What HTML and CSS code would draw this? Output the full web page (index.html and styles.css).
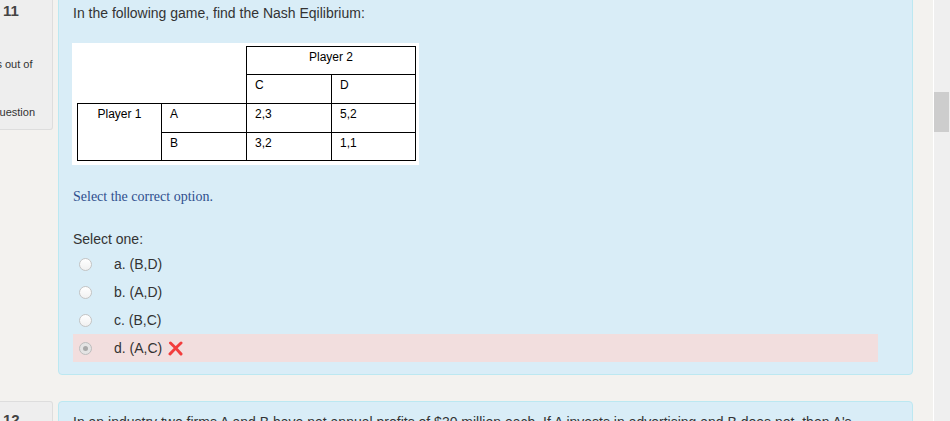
FILE: index.html
```html
<!DOCTYPE html>
<html>
<head>
<meta charset="utf-8">
<link rel="stylesheet" href="styles.css">
</head>
<body>
<div class="page">
  <div class="main">
    <div class="que">
      <div class="info">
        <h3 class="qno">11</h3>
        <div class="info-line first">Marks out of<br>1.00</div>
        <div class="info-line second">Flag question</div>
      </div>
      <div class="content">
        <p class="qtext">In the following game, find the Nash Eqilibrium:</p>
        <div class="figure">
          <table class="game">
            <colgroup>
              <col class="c84">
              <col class="c85">
              <col class="c85">
              <col class="c84">
            </colgroup>
            <tr class="r1">
              <td class="blank" colspan="2" rowspan="2"></td>
              <td class="center" colspan="2">Player 2</td>
            </tr>
            <tr class="r2">
              <td>C</td>
              <td>D</td>
            </tr>
            <tr class="r3">
              <td class="center" rowspan="2">Player 1</td>
              <td>A</td>
              <td>2,3</td>
              <td>5,2</td>
            </tr>
            <tr class="r4">
              <td>B</td>
              <td>3,2</td>
              <td>1,1</td>
            </tr>
          </table>
        </div>
        <p class="prompt-serif">Select the correct option.</p>
        <p class="prompt">Select one:</p>
        <div class="answers">
          <div class="opt"><span class="radio"></span><span class="label">a. (B,D)</span></div>
          <div class="opt"><span class="radio"></span><span class="label">b. (A,D)</span></div>
          <div class="opt"><span class="radio"></span><span class="label">c. (B,C)</span></div>
          <div class="opt incorrect"><span class="radio checked"></span><span class="label">d. (A,C)</span>
            <svg class="xmark" width="15" height="15" viewBox="0 0 15 15"><path d="M2.5 2 Q7.5 6.5 13 13 M13 2 Q7.5 7 2 13" stroke="#f23d3d" stroke-width="3" fill="none" stroke-linecap="round"/></svg>
          </div>
        </div>
      </div>
    </div>
    <div class="que">
      <div class="info">
        <h3 class="qno">12</h3>
      </div>
      <div class="content">
        <p class="qtext">In an industry two firms A and B have net annual profits of $30 million each. If A invests in advertising and B does not, then A's profits increase.</p>
      </div>
    </div>
  </div>
  <div class="scrollbar"><div class="thumb"></div></div>
</div>
</body>
</html>
```

FILE: styles.css
```css
html, body {
  margin: 0;
  padding: 0;
}
body {
  background: #f3f2ef;
  font-family: "Liberation Sans", Arial, sans-serif;
  font-size: 14px;
  color: #333;
  height: 421px;
  overflow: hidden;
}
.page {
  display: flex;
  height: 421px;
}
.main {
  flex: 1;
  margin-top: -8px;
}
.que {
  display: flex;
  align-items: flex-start;
  gap: 5px;
  margin-bottom: 26px;
}
.info {
  width: 53px;
  height: 138px;
  box-sizing: border-box;
  padding-top: 8px;
  background: #eee;
  border: 1px solid #ddd;
  border-left: none;
  border-radius: 0 3px 3px 0;
  overflow: hidden;
  flex-shrink: 0;
}
.qno {
  margin: 0;
  padding-left: 3px;
  font-size: 15px;
  line-height: 20px;
  font-weight: bold;
  color: #444;
}
.info-line {
  white-space: nowrap;
  font-size: 11px;
  line-height: 16px;
  color: #333;
}
.info-line.first {
  margin-top: 35px;
  margin-left: -28px;
}
.info-line.second {
  margin-top: 16px;
  margin-left: -31px;
}
.content {
  flex: 1;
  margin-right: 20px;
  background: #d9edf7;
  border: 1px solid #bce8f1;
  border-radius: 4px;
  padding: 10px 34px 12px 14px;
}
.qtext {
  margin: 0;
  line-height: 20px;
}
.figure {
  margin-top: 20px;
  margin-left: -1px;
  width: 347px;
  height: 122px;
  box-sizing: border-box;
  background: #fff;
  padding: 3px 0 0 5px;
}
.game {
  border-collapse: collapse;
  table-layout: fixed;
  width: 339px;
  font-family: "Liberation Sans", Arial, sans-serif;
  font-size: 12px;
  color: #000;
}
.game .c84 { width: 84px; }
.game .c85 { width: 85px; }
.game td {
  border: 1px solid #000;
  vertical-align: top;
  padding: 2px 0 0 8px;
  line-height: 16px;
}
.game td.blank {
  border: none;
}
.game td.center {
  text-align: center;
  padding-left: 0;
}
.game .r1 { height: 28px; }
.game .r2 { height: 29px; }
.game .r3 { height: 29px; }
.game .r4 { height: 28px; }
.prompt-serif {
  margin: 22px 0 0;
  font-family: "Liberation Serif", "Times New Roman", serif;
  font-size: 14px;
  line-height: 20px;
  color: #2f4f8e;
}
.prompt {
  margin: 22px 0 0;
  line-height: 20px;
}
.answers {
  margin-top: 1px;
}
.opt {
  display: flex;
  align-items: center;
  height: 28px;
  line-height: 28px;
}
.opt.incorrect {
  background: #f2dede;
}
.radio {
  width: 13px;
  height: 13px;
  box-sizing: border-box;
  border-radius: 50%;
  border: 1px solid #c4c4c4;
  background: linear-gradient(#ffffff, #f1f1f1);
  margin-left: 6px;
  margin-right: 22px;
  flex-shrink: 0;
  display: flex;
  align-items: center;
  justify-content: center;
}
.radio.checked {
  background: #e4e4e4;
  border-color: #bdbdbd;
}
.radio.checked::after {
  content: "";
  width: 5px;
  height: 5px;
  border-radius: 50%;
  background: #a9a9a9;
}
.label {
  white-space: nowrap;
}
.xmark {
  margin-left: 6px;
}
.scrollbar {
  width: 16px;
  border-left: 1px solid #fff;
  background: #efefef;
  flex-shrink: 0;
}
.thumb {
  margin-top: 92px;
  width: 15px;
  height: 40px;
  background: #cdcdcd;
}
```
